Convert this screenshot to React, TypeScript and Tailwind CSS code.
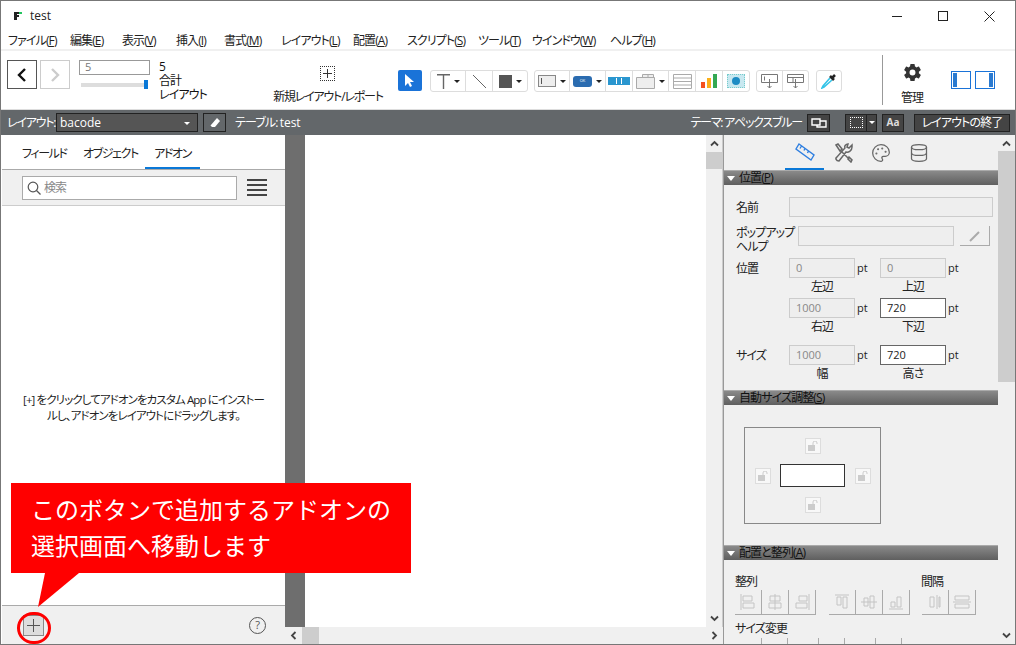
import React from 'react';
import { Database, Palette } from 'lucide-react';
import { IoSettingsSharp } from 'react-icons/io5';

const menus = [
  { label: 'ファイル', key: 'F', cls: 'w-[62px]' },
  { label: '編集', key: 'E', cls: 'w-[52px]' },
  { label: '表示', key: 'V', cls: 'w-[54px]' },
  { label: '挿入', key: 'I', cls: 'w-[48px]' },
  { label: '書式', key: 'M', cls: 'w-[57px]' },
  { label: 'レイアウト', key: 'L', cls: 'w-[72px]' },
  { label: '配置', key: 'A', cls: 'w-[54px]' },
  { label: 'スクリプト', key: 'S', cls: 'w-[71px]' },
  { label: 'ツール', key: 'T', cls: 'w-[54px]' },
  { label: 'ウインドウ', key: 'W', cls: 'w-[78px]' },
  { label: 'ヘルプ', key: 'H', cls: 'w-[60px]' },
];

function Caret({ className = 'border-t-[#222]' }: { className?: string }) {
  return <span className={`block h-0 w-0 border-x-[3px] border-t-[3px] border-x-transparent ${className}`} />;
}

function TitleBar() {
  return (
    <div className="flex h-[30px] items-center bg-white pl-[12px] text-xs text-[#222]">
      <svg width="10" height="10" viewBox="0 0 10 10">
        <path d="M1 1h5v2H4v1h2v2H4v3H1z" fill="#222" />
        <rect x="6" y="1" width="3" height="2" fill="#22c55e" />
      </svg>
      <span className="ml-[7px] tracking-normal">test</span>
      <div className="ml-auto flex items-center">
        <div className="flex w-[46px] justify-center"><div className="h-px w-[10px] bg-[#222]" /></div>
        <div className="flex w-[46px] justify-center"><div className="h-[10px] w-[10px] border border-[#222]" /></div>
        <div className="mr-[3px] flex w-[46px] justify-center">
          <svg width="11" height="11" viewBox="0 0 11 11" stroke="#222" strokeWidth="1"><path d="M.5.5l10 10M10.5.5l-10 10" /></svg>
        </div>
      </div>
    </div>
  );
}

function MenuBar() {
  return (
    <div className="flex h-[20px] items-center border-b-2 border-[#f0f0f0] bg-white pt-[1px] pl-[7px] text-xs text-[#222]">
      {menus.map((m) => (
        <span key={m.key} className={`${m.cls} shrink-0 whitespace-nowrap`}>
          {m.label}(<span className="underline">{m.key}</span>)
        </span>
      ))}
    </div>
  );
}

function ToolCell({ children, caret, cls }: { children: React.ReactNode; caret?: boolean; cls: string }) {
  return (
    <div className={`flex h-full items-center justify-center gap-[4px] border-r border-[#ddd] last:border-r-0 ${cls}`}>
      {children}
      {caret && <Caret />}
    </div>
  );
}

function Toolbar() {
  return (
    <div className="flex h-[58px] bg-white text-xs text-[#222]">
      <div className="mt-[9px] ml-[6px] flex h-[29px] w-[30px] items-center justify-center border border-[#555]">
        <svg width="10" height="16" viewBox="0 0 10 16" fill="none" stroke="#111" strokeWidth="2.4"><path d="M8 2L2 8l6 6" /></svg>
      </div>
      <div className="mt-[9px] ml-[3px] flex h-[29px] w-[30px] items-center justify-center border border-[#ccc]">
        <svg width="10" height="16" viewBox="0 0 10 16" fill="none" stroke="#ccc" strokeWidth="2.4"><path d="M2 2l6 6-6 6" /></svg>
      </div>
      <div className="mt-[9px] ml-[9px] w-[71px]">
        <div className="flex h-[15px] items-center border border-[#999] pl-[5px] text-[11px] text-[#777]">5</div>
        <div className="mt-[5px] flex h-[9px] items-center pl-[2px]">
          <div className="h-[4px] w-[63px] bg-[#ddd]" />
          <div className="h-[9px] w-[4px] bg-[#0a78d7]" />
        </div>
      </div>
      <div className="mt-[9px] ml-[9px] flex w-[60px] flex-col text-[12px] leading-[14px] text-[#111]">
        <span>5</span>
        <span>合計</span>
        <span>レイアウト</span>
      </div>
      <div className="mt-[15px] ml-[54px] flex w-[110px] flex-col items-center">
        <div className="ml-[-2px] flex h-[15px] w-[15px] items-center justify-center border border-dotted border-[#333] text-[#333]">
          <svg width="9" height="9" viewBox="0 0 9 9" stroke="#333"><path d="M4.500 0v9M0 4.500h9" /></svg>
        </div>
        <span className="mt-[8px] whitespace-nowrap text-xs leading-4 tracking-[-1.2px]">新規レイアウト/レポート</span>
      </div>
      <div className="mt-[19px] ml-[15px] flex h-[21px] w-[24px] items-center justify-center rounded-[2px] bg-[#1a73d8]">
        <svg width="12" height="15" viewBox="0 0 12 15" fill="#fff"><path d="M1 1v12l3-3 2 4 2-1-2-4h4z" /></svg>
      </div>
      <div className="mt-[19px] ml-[8px] flex h-[22px] w-[98px] rounded-[3px] border border-[#ddd]">
        <ToolCell caret cls="w-[35px]">
          <svg width="13" height="15" viewBox="0 0 13 15" fill="#666"><path d="M0 0h13v1.500H7.200V15H5.800V1.500H0z" /></svg>
        </ToolCell>
        <ToolCell cls="w-[27px]">
          <svg width="13" height="13" viewBox="0 0 13 13" stroke="#666"><path d="M0 0l13 13" /></svg>
        </ToolCell>
        <ToolCell caret cls="flex-1">
          <div className="h-[13px] w-[13px] bg-[#555]" />
        </ToolCell>
      </div>
      <div className="mt-[19px] ml-[6px] flex h-[22px] w-[216px] rounded-[3px] border border-[#ddd]">
        <ToolCell caret cls="w-[35px]">
          <div className="flex h-[12px] w-[18px] items-center border border-[#888] bg-[#eee] pl-[2px]"><div className="h-[6px] w-px bg-[#555]" /></div>
        </ToolCell>
        <ToolCell caret cls="w-[36px]">
          <div className="flex h-[11px] w-[19px] items-center justify-center rounded-[3px] bg-[#2b6cb0] text-[4px] leading-none tracking-normal text-white">OK</div>
        </ToolCell>
        <ToolCell cls="w-[27px]">
          <div className="flex h-[8px] w-[22px] items-center justify-center gap-[4px] bg-[#2a96cf]">
            <div className="h-[6px] w-px bg-white" /><div className="h-[6px] w-px bg-white" />
          </div>
        </ToolCell>
        <ToolCell caret cls="w-[36px]">
          <svg width="19" height="15" viewBox="0 0 19 15" fill="#eee" stroke="#aaa"><path d="M.5 3.500h18v11H.5zM6.500 3.500v-3h11v3M12 .5v3" /></svg>
        </ToolCell>
        <ToolCell cls="w-[27px]">
          <svg width="19" height="15" viewBox="0 0 19 15" fill="none" stroke="#aaa"><path d="M.5.5h18v14H.5zM.5 4h18M.5 7.500h18M.5 11h18" /></svg>
        </ToolCell>
        <ToolCell cls="w-[27px]">
          <svg width="17" height="15" viewBox="0 0 17 15"><rect x="0" y="8" width="4" height="6" fill="#f4511e" /><rect x="6" y="4" width="4" height="10" fill="#fbb01a" /><rect x="12" y="0" width="4" height="14" fill="#34a853" /></svg>
        </ToolCell>
        <ToolCell cls="flex-1">
          <div className="flex h-[14px] w-[18px] items-center justify-center border border-dotted border-[#7cc] bg-[#c8e8f0]">
            <div className="h-[8px] w-[8px] rounded-full bg-[#1d8cc4]" />
          </div>
        </ToolCell>
      </div>
      <div className="mt-[19px] ml-[6px] flex h-[22px] w-[53px] rounded-[3px] border border-[#ddd]">
        <ToolCell cls="w-[26px]">
          <svg width="17" height="15" viewBox="0 0 17 15" fill="none" stroke="#777"><path d="M.5.5h16v8H.5zM3.500 2.500v4M8.500 5v9M6.500 12l2 2 2-2" /></svg>
        </ToolCell>
        <ToolCell cls="flex-1">
          <svg width="17" height="15" viewBox="0 0 17 15" fill="none" stroke="#777"><path d="M.5.5h16v8H.5zM.5 3.500h16M6 3.500v5M8.500 5v9M6.500 12l2 2 2-2" /></svg>
        </ToolCell>
      </div>
      <div className="mt-[19px] ml-[7px] flex h-[22px] w-[26px] items-center justify-center rounded-[3px] border border-[#ddd]">
        <svg width="16" height="16" viewBox="0 0 16 16" fill="none">
          <path d="M9 5L2 13l-1 2 2-1 8-7" stroke="#35c4e8" strokeWidth="1.6" />
          <path d="M9 3l4 4M11 5l3-3" stroke="#222" strokeWidth="2.6" />
        </svg>
      </div>
      <div className="mt-[4px] ml-[40px] h-[50px] w-px bg-[#999]" />
      <div className="mt-[12px] ml-[10px] flex w-[38px] flex-col items-center">
        <IoSettingsSharp size={19} color="#333" />
        <span className="mt-[8px] text-xs leading-4">管理</span>
      </div>
      <div className="mt-[20px] ml-[20px] flex h-[18px] w-[20px] border border-[#1a73d8] pl-px">
        <div className="my-px w-[4px] bg-[#2a7ad0]" />
      </div>
      <div className="mt-[20px] ml-[4px] flex h-[18px] w-[20px] justify-end border border-[#1a73d8] pr-px">
        <div className="my-px w-[4px] bg-[#2a7ad0]" />
      </div>
    </div>
  );
}

function DarkBar() {
  return (
    <div className="flex h-[26px] items-center border-t border-[#ddd] bg-[#63676a] pl-[6px] text-xs text-white">
      <span className="w-[49px] shrink-0 pt-px tracking-[-1.2px] whitespace-nowrap">レイアウト:</span>
      <div className="flex h-[19px] w-[142px] items-center justify-between border border-[#222] bg-[#555] pt-px pr-[7px] pl-[3px] text-[12px] tracking-normal">
        bacode
        <Caret className="border-t-white" />
      </div>
      <div className="ml-[5px] flex h-[19px] w-[23px] items-center justify-center border border-[#222]">
        <svg width="12" height="12" viewBox="0 0 12 12" fill="#fff"><path d="M8 1l3 3-5 6H3L1.500 8.500z" /></svg>
      </div>
      <span className="ml-[9px] pt-px">テーブル: <span className="tracking-normal">test</span></span>
      <span className="ml-auto pt-px tracking-[-1.2px] whitespace-nowrap">テーマ: アペックスブルー</span>
      <div className="ml-[5px] flex h-[18px] w-[23px] items-center justify-center border border-[#222] bg-[#444]">
        <svg width="16" height="10" viewBox="0 0 16 10" fill="none" stroke="#fff" strokeWidth="1.4"><path d="M1 1h8v6H1zM9 3h6v6H6V7" /></svg>
      </div>
      <div className="ml-[15px] flex h-[18px] w-[32px] items-center border border-[#222] bg-[#444]">
        <div className="ml-[4px] h-[11px] w-[13px] border border-dotted border-white" />
        <div className="ml-[3px] h-full w-px bg-[#222]" />
        <div className="flex flex-1 justify-center"><Caret className="border-t-white" /></div>
      </div>
      <div className="ml-[5px] flex h-[18px] w-[22px] items-center justify-center border border-[#222] bg-[#444] text-[10px] font-bold tracking-normal text-[#ddd]">Aa</div>
      <div className="mr-[5px] ml-[10px] flex h-[18px] w-[96px] items-center justify-center border border-[#222] bg-[#444] pt-px">レイアウトの終了</div>
    </div>
  );
}

function LeftPanel() {
  return (
    <div className="ml-[1px] flex w-[283px] shrink-0 flex-col bg-white text-xs text-[#222]">
      <div className="flex h-[34px] pl-[20px] tracking-[-1.4px] whitespace-nowrap">
        <span className="w-[61px] pt-[11px]">フィールド</span>
        <span className="w-[62px] pt-[11px]">オブジェクト</span>
        <span className="flex w-[55px] justify-center border-b-2 border-[#0a78d7] pt-[11px]">アドオン</span>
      </div>
      <div className="flex h-[37px] items-center border-y border-t-[#aaa] border-b-[#ccc] bg-[#f0f0f0] pl-[20px]">
        <div className="flex h-[24px] w-[215px] items-center border border-[#aaa] bg-white pl-[4px] text-[#888]">
          <svg width="14" height="14" viewBox="0 0 14 14" fill="none" stroke="#555" strokeWidth="1.2"><circle cx="6" cy="6" r="4.800" /><path d="M9.500 9.500L13.500 13.500" /></svg>
          <span className="ml-[3px] pt-px">検索</span>
        </div>
        <div className="ml-[10px] flex h-[18px] w-[20px] flex-col justify-between">
          <div className="h-[2px] bg-[#444]" />
          <div className="h-[2px] bg-[#444]" />
          <div className="h-[2px] bg-[#444]" />
          <div className="h-[2px] bg-[#444]" />
        </div>
      </div>
      <div className="flex flex-1 items-center justify-center pt-[5px] text-center text-[11.5px] leading-4 whitespace-nowrap">
        <p>[+] をクリックしてアドオンをカスタム App にインストー<br />ルし、アドオンをレイアウトにドラッグします。</p>
      </div>
      <div className="flex h-[39px] items-center justify-between border-t border-[#aaa] bg-[#f0f0f0] pr-[19px] pl-[21px]">
        <div className="flex h-[21px] w-[21px] items-center justify-center border border-[#888] bg-[#ddd]">
          <svg width="13" height="13" viewBox="0 0 13 13" stroke="#555"><path d="M6.500 0v13M0 6.500h13" /></svg>
        </div>
        <div className="flex h-[17px] w-[17px] items-center justify-center rounded-full border border-[#555] text-[11px] tracking-normal text-[#555]">?</div>
      </div>
    </div>
  );
}

function ScrollArrow({ d }: { d: string }) {
  return (
    <svg width="9" height="7" viewBox="0 0 9 7" fill="none" stroke="#444" strokeWidth="1.8">
      <path d={d} />
    </svg>
  );
}

function Canvas() {
  return (
    <div className="flex w-[438px] shrink-0 flex-col">
      <div className="flex flex-1">
        <div className="w-[20px] bg-[#6e6e6e]" />
        <div className="flex-1 bg-white" />
        <div className="flex w-[17px] flex-col items-center border-r border-[#ccc] bg-[#f0f0f0]">
          <div className="flex h-[17px] items-center"><ScrollArrow d="M1 5.500l3.500-3.500 3.500 3.500" /></div>
          <div className="h-[17px] w-full bg-[#cdcdcd]" />
          <div className="mt-auto flex h-[17px] items-center"><ScrollArrow d="M1 1.500l3.500 3.500 3.500-3.500" /></div>
        </div>
      </div>
      <div className="flex h-[17px] items-center bg-[#f0f0f0]">
        <div className="flex w-[17px] justify-center">
          <svg width="7" height="9" viewBox="0 0 7 9" fill="none" stroke="#444" strokeWidth="1.8"><path d="M5.500 1L2 4.500 5.500 8" /></svg>
        </div>
        <div className="h-full w-[17px] bg-[#cdcdcd]" />
        <div className="ml-auto flex w-[17px] justify-center">
          <svg width="7" height="9" viewBox="0 0 7 9" fill="none" stroke="#444" strokeWidth="1.8"><path d="M1.500 1L5 4.500 1.500 8" /></svg>
        </div>
      </div>
    </div>
  );
}

function SectionHeader({ label, k }: { label: string; k: string }) {
  return (
    <div className="flex h-[15px] shrink-0 items-center border-t border-[#aaa] bg-gradient-to-b from-[#8a8a8a] to-[#5f5f5f] pl-[3px] text-xs text-[#111]">
      <span className="block h-0 w-0 border-x-[4px] border-t-[5px] border-x-transparent border-t-white" />
      <span className="ml-[4px] leading-none">
        {label}(<span className="underline">{k}</span>)
      </span>
    </div>
  );
}

function Field({ value, active, cls = 'w-[66px]' }: { value?: string; active?: boolean; cls?: string }) {
  return (
    <div className={`flex h-[20px] shrink-0 items-center pl-[6px] text-[11px] tracking-normal ${cls} ${active ? 'border border-[#666] bg-white text-[#222]' : 'border border-[#ccc] bg-[#eee] text-[#888]'}`}>
      {value}
    </div>
  );
}

function SizeRow({ label, a, b, la, lb, active }: { label?: string; a: string; b: string; la: string; lb: string; active?: boolean }) {
  return (
    <div className="flex h-[40px] text-xs leading-[14px]">
      <span className="w-[53px] pt-[4px]">{label}</span>
      {[{ v: a, l: la, on: false }, { v: b, l: lb, on: active }].map((f) => (
        <div key={f.l} className="w-[91px]">
          <div className="flex items-center">
            <Field value={f.v} active={f.on} />
            <span className="ml-[2px] text-[11px] tracking-normal">pt</span>
          </div>
          <div className="mt-[1px] w-[66px] pt-px text-center">{f.l}</div>
        </div>
      ))}
    </div>
  );
}

function Lock() {
  return (
    <div className="flex h-[16px] w-[16px] items-center justify-center border border-[#ddd] bg-[#f8f8f8]">
      <svg width="10" height="10" viewBox="0 0 10 10" fill="#ccc"><rect x="0" y="4" width="7" height="6" /><path d="M5 4V2a2 2 0 0 1 4 0v1" fill="none" stroke="#ccc" /></svg>
    </div>
  );
}

function AlignGroup({ items }: { items: string[] }) {
  return (
    <div className="flex h-[25px] border-b border-[#aaa]">
      {items.map((d, i) => (
        <div key={i} className="flex w-[27px] items-center justify-center border-r border-[#aaa]">
          <svg width="20" height="18" viewBox="0 0 20 18" fill="none" stroke="#c4c4c4"><path d={d} /></svg>
        </div>
      ))}
    </div>
  );
}

function RightPanel() {
  return (
    <div className="flex min-w-0 flex-1 border-l border-[#999] bg-[#f0f0f0] text-[#222]">
      <div className="flex h-[509px] w-[274px] shrink-0 flex-col overflow-hidden">
        <div className="flex h-[35px] shrink-0 pl-[61px]">
          <div className="flex w-[39px] items-center justify-center border-b-2 border-[#0a78d7]">
            <svg width="22" height="20" viewBox="0 0 22 20" fill="none" stroke="#2f7fe0" strokeWidth="1.4">
              <path d="M5 2l15 11-3 5L2 7zM7.500 4l-1.500 2.500M11 6.500l-1 2M14.500 9l-1 2" />
            </svg>
          </div>
          <div className="flex w-[39px] items-center justify-center">
            <svg width="20" height="20" viewBox="0 0 20 20" fill="none" stroke="#666" strokeWidth="1.5">
              <path d="M2 2l2-1 4 5-2 2zM7 8l8 8M15 14l3 3-1 2-3-3zM18 2l-3 3-2-1 1-3c-2 0-4 2-3 4L3 14c-2 1-1 4 2 4l7-9c2 1 6-1 6-5z" />
            </svg>
          </div>
          <div className="flex w-[36px] items-center justify-center"><Palette size={20} color="#666" strokeWidth={1.5} /></div>
          <div className="flex w-[39px] items-center justify-center"><Database size={20} color="#666" strokeWidth={1.5} /></div>
        </div>
        <SectionHeader label="位置" k="P" />
        <div className="flex h-[205px] shrink-0 flex-col pt-[12px] pl-[12px] text-xs leading-[14px]">
          <div className="flex h-[20px] items-center">
            <span className="w-[53px] pt-[2px]">名前</span>
            <Field cls="w-[204px]" />
          </div>
          <div className="mt-[9px] flex h-[30px]">
            <span className="w-[62px]">ポップアップ<br />ヘルプ</span>
            <Field cls="w-[156px]" />
            <div className="ml-[6px] flex h-[20px] w-[30px] items-center justify-center border-r border-b border-[#aaa]">
              <svg width="14" height="14" viewBox="0 0 14 14" fill="none" stroke="#aaa" strokeWidth="2"><path d="M2 12l9-9" /></svg>
            </div>
          </div>
          <div className="mt-[2px]"><SizeRow label="位置" a="0" b="0" la="左辺" lb="上辺" /></div>
          <SizeRow a="1000" b="720" la="右辺" lb="下辺" active />
          <div className="mt-[7px]"><SizeRow label="サイズ" a="1000" b="720" la="幅" lb="高さ" active /></div>
        </div>
        <SectionHeader label="自動サイズ調整" k="S" />
        <div className="h-[140px] shrink-0 pt-[22px] pl-[20px]">
          <div className="grid h-[97px] w-[137px] grid-cols-[1fr_65px_1fr] grid-rows-[1fr_23px_1fr] place-items-center border border-[#888]">
            <div className="col-start-2"><Lock /></div>
            <div className="col-start-1 row-start-2"><Lock /></div>
            <div className="col-start-2 row-start-2 h-[23px] w-[65px] border border-[#333] bg-white" />
            <div className="col-start-3 row-start-2"><Lock /></div>
            <div className="col-start-2 row-start-3"><Lock /></div>
          </div>
        </div>
        <SectionHeader label="配置と整列" k="A" />
        <div className="flex-1 pt-[14px] pl-[11px] text-xs leading-4">
          <div className="flex"><span className="w-[186px]">整列</span><span>間隔</span></div>
          <div className="flex">
            <AlignGroup items={['M3 1v16M5 3h9v5H5zM5 10h11v5H5z', 'M10 1v16M5 3h10v5H5zM4 10h12v5H4z', 'M17 1v16M7 3h8v5H7zM4 10h11v5H4z']} />
            <div className="ml-[13px]" />
            <AlignGroup items={['M3 2h14M5 4h4v8H5zM11 4h4v11h-4z', 'M2 9h16M5 5h4v8H5zM11 3h4v12h-4z', 'M3 16h14M5 9h4v5H5zM11 4h4v10h-4z']} />
            <div className="ml-[12px]" />
            <AlignGroup items={['M5 4h4v10H5zM12 2v14M14 4h1v10h-1z', 'M3 3h14v4H3zM1 9h18M3 11h14v4H3z']} />
          </div>
          <div className="mt-[6px]">サイズ変更</div>
          <div className="mt-[1px] flex h-[8px]">
            <div className="ml-[26px] h-full w-[27px] border-x border-[#aaa]" />
            <div className="ml-[30px] h-full w-[27px] border-x border-[#aaa]" />
            <div className="ml-[30px] h-full w-[27px] border-x border-[#aaa]" />
          </div>
        </div>
      </div>
      <div className="flex h-[509px] flex-1 flex-col items-center">
        <div className="flex h-[16px] items-center"><ScrollArrow d="M1 5.500l3.500-3.500 3.500 3.500" /></div>
        <div className="h-[231px] w-[17px] bg-[#cdcdcd]" />
        <div className="mt-auto flex h-[17px] items-center"><ScrollArrow d="M1 1.500l3.500 3.500 3.500-3.500" /></div>
      </div>
    </div>
  );
}

function Callout() {
  return (
    <div className="absolute top-[482px] left-[10px] h-[90px] w-[400px] bg-[#ff0000] pt-[9px] pl-[20px] text-[24px] leading-[36px] tracking-normal text-white [font-feature-settings:normal]">
      <div className="whitespace-nowrap">このボタンで追加するアドオンの</div>
      <div className="whitespace-nowrap">選択画面へ移動します</div>
      <svg width="42" height="36" viewBox="0 0 42 36" className="absolute top-[90px] left-[27px]" fill="#ff0000">
        <path d="M7 0h34L0 34z" />
      </svg>
    </div>
  );
}

export default function App() {
  return (
    <div className="relative flex h-[645px] w-[1016px] flex-col overflow-hidden border border-[#777] bg-white tracking-[-0.9px] [font-family:'Open_Sans','Noto_Sans_CJK_JP',sans-serif] [font-feature-settings:'palt']">
      <TitleBar />
      <MenuBar />
      <Toolbar />
      <DarkBar />
      <div className="flex min-h-0 flex-1">
        <LeftPanel />
        <Canvas />
        <RightPanel />
      </div>
      <Callout />
      <div className="absolute top-[611px] left-[16px] h-[32px] w-[34px] rounded-full border-[3px] border-[#ff0000]" />
    </div>
  );
}
